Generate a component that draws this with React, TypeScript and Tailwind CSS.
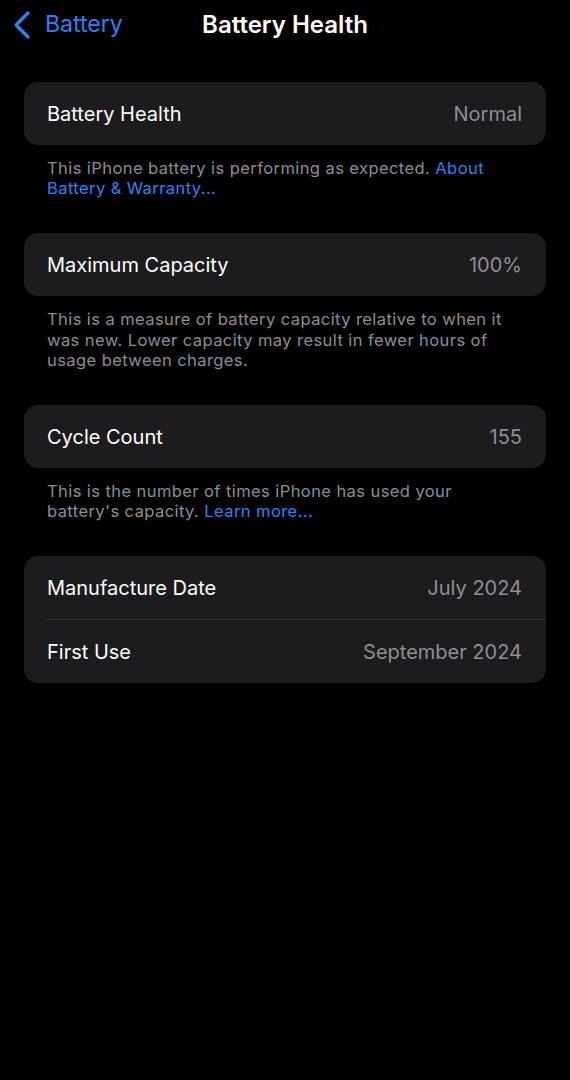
import { ReactNode } from "react";

type Row = { label: string; value: string };

function Card({ rows }: { rows: Row[] }) {
  return (
    <div className="mx-[24px] rounded-[14px] bg-[#1c1c1e] overflow-hidden">
      {rows.map((r, i) => (
        <div key={r.label} className="pl-[23px]">
          {i > 0 && <div className="h-px bg-[#333336]"></div>}
          <div className="h-[63px] flex items-center justify-between pr-[24px] text-[20px]">
            <span className="text-white">{r.label}</span>
            <span className="text-[#8e8e93]">{r.value}</span>
          </div>
        </div>
      ))}
    </div>
  );
}

function Footer({ children }: { children: ReactNode }) {
  return (
    <p className="mx-[47px] mt-[13px] mb-[35px] text-[16.5px] leading-[20.2px] tracking-[0.42px] text-[#8d8d93]">
      {children}
    </p>
  );
}

const Link = ({ children }: { children: ReactNode }) => (
  <span className="text-[#2a84f0]">{children}</span>
);

export default function App() {
  return (
    <div className="min-h-screen bg-black font-['Inter',sans-serif] antialiased">
      {/* Nav bar */}
      <div className="h-[49px] grid grid-cols-[1fr_auto_1fr] items-center">
        <div className="flex items-center pl-[13px] text-[#2a84f0] text-[23px]">
          <svg width="18" height="28" viewBox="0 0 18 28" fill="none" className="mr-[14px]">
            <polyline
              points="15,2 3,14 15,26"
              stroke="#2a84f0"
              strokeWidth="3.2"
              strokeLinecap="round"
              strokeLinejoin="round"
            />
          </svg>
          <span>Battery</span>
        </div>
        <h1 className="text-white text-[24px] font-semibold">Battery Health</h1>
        <div></div>
      </div>

      <div className="pt-[33px]">
        <Card rows={[{ label: "Battery Health", value: "Normal" }]} />
        <Footer>
          This iPhone battery is performing as expected. <Link>About Battery &amp; Warranty...</Link>
        </Footer>

        <Card rows={[{ label: "Maximum Capacity", value: "100%" }]} />
        <Footer>
          This is a measure of battery capacity relative to when it was new. Lower capacity may result in
          fewer hours of usage between charges.
        </Footer>

        <Card rows={[{ label: "Cycle Count", value: "155" }]} />
        <Footer>
          This is the number of times iPhone has used your battery's capacity. <Link>Learn more...</Link>
        </Footer>

        <Card
          rows={[
            { label: "Manufacture Date", value: "July 2024" },
            { label: "First Use", value: "September 2024" },
          ]}
        />
      </div>
    </div>
  );
}
